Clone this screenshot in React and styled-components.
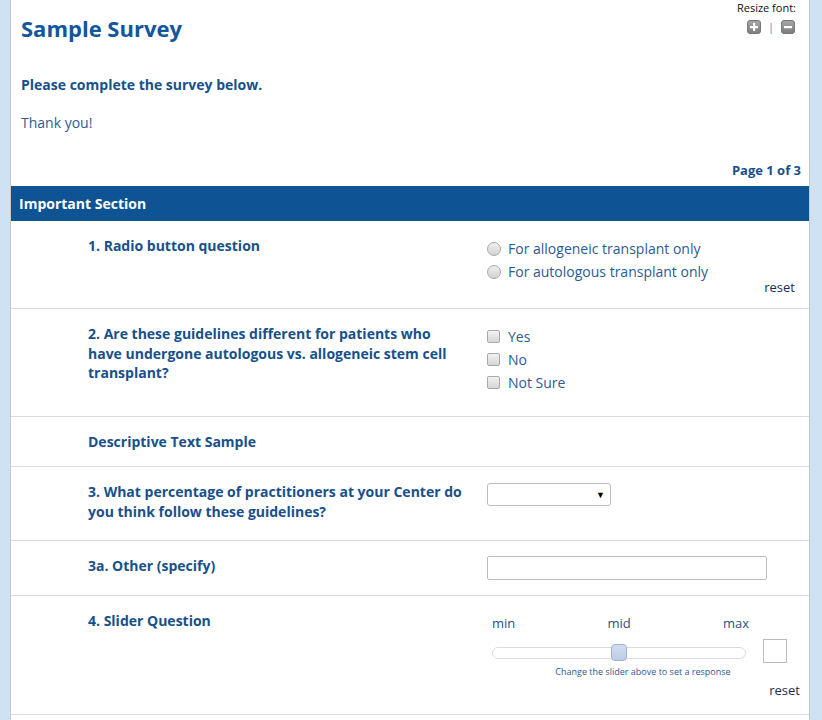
import React from "react";
import styled, { createGlobalStyle } from "styled-components";

const Global = createGlobalStyle`
  html, body { margin: 0; padding: 0; background: #cfe2f3; }
  body { font-family: "Open Sans", "Noto Sans", Arial, sans-serif; }
  * { box-sizing: border-box; }
`;

const Page = styled.div`
  padding-left: 10px;
  min-height: 720px;
`;

const Card = styled.div`
  width: 800px;
  min-height: 720px;
  background: #fff;
  border-left: 1px solid #c6c9cc;
  border-right: 1px solid #c6c9cc;
`;

const TopBar = styled.div`
  display: flex;
  justify-content: space-between;
  align-items: flex-start;
  padding: 0 13px 0 10px;
  height: 43px;
`;

const Title = styled.h1`
  margin: 13px 0 0;
  font-size: 22px;
  line-height: 30px;
  font-weight: 700;
  color: #13569a;
`;

const Resize = styled.div`
  display: flex;
  flex-direction: column;
  align-items: flex-end;
`;

const ResizeLabel = styled.div`
  font-size: 11px;
  line-height: 14px;
  margin-top: 1px;
  color: #111;
`;

const ResizeIcons = styled.div`
  display: flex;
  align-items: center;
  gap: 4px;
  margin-top: 5px;
  margin-right: 1px;
`;

const Sep = styled.span`
  font-size: 11px;
  line-height: 14px;
  color: #5a86c0;
  margin: 0 3px;
`;

const Intro = styled.p`
  margin: ${(p) => p.$mt}px 0 0;
  padding: 0 10px;
  font-size: 14px;
  line-height: 20px;
  font-weight: ${(p) => (p.$bold ? 700 : 400)};
  color: ${(p) => (p.$bold ? "#17508c" : "#2b5c93")};
`;

const PageNum = styled.div`
  margin-top: 27px;
  padding-right: 8px;
  text-align: right;
  font-size: 13px;
  line-height: 20px;
  font-weight: 700;
  color: #17508c;
  margin-bottom: 6px;
`;

const Band = styled.div`
  height: 35px;
  line-height: 35px;
  background: #0e5494;
  color: #fff;
  font-size: 14px;
  font-weight: 700;
  padding-left: 8px;
`;

const Row = styled.div`
  display: grid;
  grid-template-columns: 376px 1fr;
  column-gap: 23px;
  padding: 15px 14px 0 77px;
  height: ${(p) => p.$h}px;
  border-bottom: 1px solid #dcdcdc;
`;

const Label = styled.div`
  font-size: 14px;
  line-height: 19.6px;
  font-weight: 700;
  color: #17508c;
`;

const Answer = styled.div`
  display: flex;
  flex-direction: column;
  padding-top: ${(p) => p.$pt || 0}px;
`;

const Option = styled.label`
  display: flex;
  align-items: center;
  gap: 7px;
  font-size: 14px;
  line-height: 23px;
  color: #2c5b92;
`;

const Radio = styled.span`
  width: 14px;
  height: 14px;
  border-radius: 50%;
  border: 1px solid #a9a9a9;
  background: linear-gradient(#f0f0f0, #d2d2d2);
  flex: none;
`;

const Check = styled.span`
  width: 13px;
  height: 13px;
  border-radius: 2px;
  border: 1px solid #a9a9a9;
  background: linear-gradient(#f2f2f2, #d6d6d6);
  flex: none;
  margin-right: 1px;
`;

const Reset = styled.div`
  align-self: flex-end;
  font-size: 13px;
  line-height: ${(p) => p.$lh}px;
  color: #1c2a55;
  margin-top: ${(p) => p.$mt || 0}px;
  margin-right: ${(p) => p.$mr || 0}px;
`;

const Select = styled.div`
  margin-top: 1px;
  width: 124px;
  height: 23px;
  border: 1px solid #bdbdbd;
  border-radius: 3px;
  display: flex;
  align-items: center;
  justify-content: flex-end;
  padding-right: 5px;
  font-size: 9px;
  color: #000;
`;

const TextInput = styled.div`
  width: 280px;
  height: 24px;
  border: 1px solid #bdbdbd;
  border-radius: 2px;
`;

const SliderWrap = styled.div`
  margin: 2px 0 0 5px;
  width: 302px;
  display: flex;
  flex-direction: column;
`;

const Ticks = styled.div`
  width: 257px;
  display: flex;
  justify-content: space-between;
  font-size: 13px;
  line-height: 20px;
  color: #2b4f7f;
`;

const TrackRow = styled.div`
  display: flex;
  align-items: center;
  margin-top: 6px;
  height: 24px;
`;

const Track = styled.div`
  position: relative;
  width: 254px;
  height: 12px;
  border: 1px solid #dcdcdc;
  border-radius: 6px;
  background: #fff;
  margin-top: 3px;
`;

const Handle = styled.div`
  position: absolute;
  left: 118px;
  top: -4px;
  width: 16px;
  height: 17px;
  border-radius: 4px;
  border: 1px solid #9fb2d6;
  background: linear-gradient(#d3ddef, #bccbe7);
`;

const ValueBox = styled.div`
  width: 24px;
  height: 24px;
  border: 1px solid #bbb;
  margin-left: 17px;
`;

const Hint = styled.div`
  margin-top: 3px;
  text-align: center;
  font-size: 9px;
  line-height: 12px;
  color: #2a5a8f;
`;

const IconBtn = ({ minus }) => (
  <svg width="14" height="14" viewBox="0 0 14 14">
    <defs>
      <linearGradient id={minus ? "gm" : "gp"} x1="0" y1="0" x2="0" y2="1">
        <stop offset="0" stopColor="#a8a8a8" />
        <stop offset="1" stopColor="#7c7c7c" />
      </linearGradient>
    </defs>
    <rect x="0.5" y="0.5" width="13" height="13" rx="2.5" fill={`url(#${minus ? "gm" : "gp"})`} stroke="#777" />
    {minus ? (
      <rect x="3" y="6" width="8" height="2.2" fill="#fff" />
    ) : (
      <path d="M6 3h2.2v3H11v2.2H8.2V11H6V8.2H3V6h3z" fill="#fff" />
    )}
  </svg>
);

export default function App() {
  return (
    <Page>
      <Global />
      <Card>
        <TopBar>
          <Title>Sample Survey</Title>
          <Resize>
            <ResizeLabel>Resize font:</ResizeLabel>
            <ResizeIcons>
              <IconBtn />
              <Sep>|</Sep>
              <IconBtn minus />
            </ResizeIcons>
          </Resize>
        </TopBar>
        <Intro $bold $mt={32}>Please complete the survey below.</Intro>
        <Intro $mt={18}>Thank you!</Intro>
        <PageNum>Page 1 of 3</PageNum>
        <Band>Important Section</Band>

        <Row $h={88}>
          <Label>1. Radio button question</Label>
          <Answer $pt={1}>
            <Option><Radio />For allogeneic transplant only</Option>
            <Option><Radio />For autologous transplant only</Option>
            <Reset $lh={13} $mt={-2}>reset</Reset>
          </Answer>
        </Row>

        <Row $h={108}>
          <Label>2. Are these guidelines different for patients who have undergone autologous vs. allogeneic stem cell transplant?</Label>
          <Answer $pt={1}>
            <Option><Check />Yes</Option>
            <Option><Check />No</Option>
            <Option><Check />Not Sure</Option>
          </Answer>
        </Row>

        <Row $h={50}>
          <Label>Descriptive Text Sample</Label>
        </Row>

        <Row $h={74}>
          <Label>3. What percentage of practitioners at your Center do you think follow these guidelines?</Label>
          <Answer>
            <Select>▼</Select>
          </Answer>
        </Row>

        <Row $h={55}>
          <Label>3a. Other (specify)</Label>
          <Answer>
            <TextInput />
          </Answer>
        </Row>

        <Row $h={119}>
          <Label>4. Slider Question</Label>
          <Answer>
            <SliderWrap>
              <Ticks><span>min</span><span>mid</span><span>max</span></Ticks>
              <TrackRow>
                <Track><Handle /></Track>
                <ValueBox />
              </TrackRow>
              <Hint>Change the slider above to set a response</Hint>
            </SliderWrap>
            <Reset $lh={17} $mt={4} $mr={-5}>reset</Reset>
          </Answer>
        </Row>
      </Card>
    </Page>
  );
}
